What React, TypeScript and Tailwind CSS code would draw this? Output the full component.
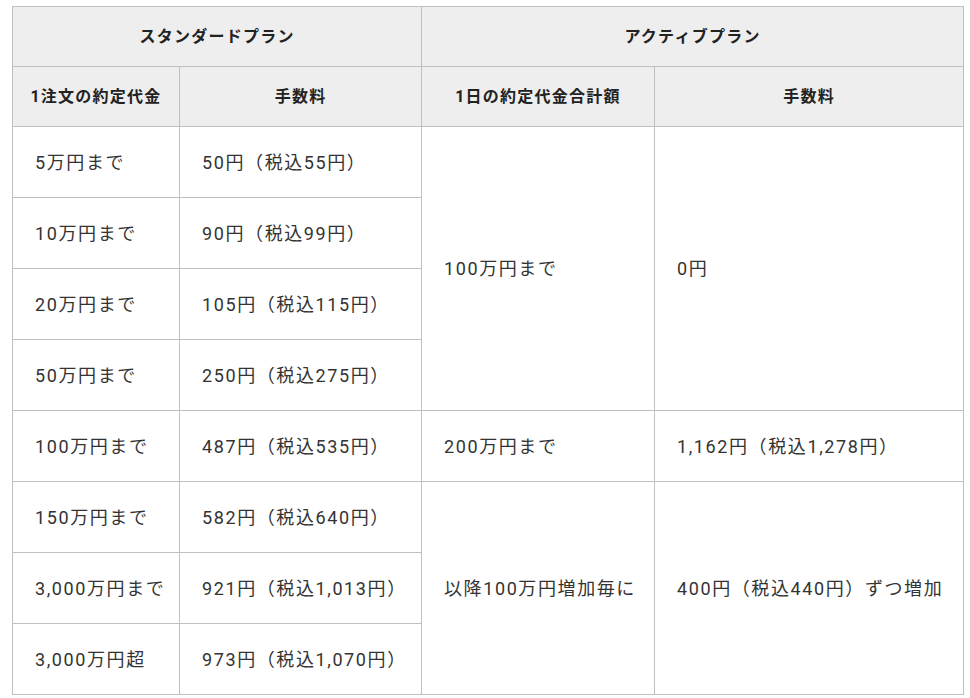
const standard = [
  ['5万円まで', '50円（税込55円）'],
  ['10万円まで', '90円（税込99円）'],
  ['20万円まで', '105円（税込115円）'],
  ['50万円まで', '250円（税込275円）'],
  ['100万円まで', '487円（税込535円）'],
  ['150万円まで', '582円（税込640円）'],
  ['3,000万円まで', '921円（税込1,013円）'],
  ['3,000万円超', '973円（税込1,070円）'],
]

// rows where the active plan column starts a (possibly spanning) cell
const active: Record<number, { amount: string; fee: string; span: number }> = {
  0: { amount: '100万円まで', fee: '0円', span: 4 },
  4: { amount: '200万円まで', fee: '1,162円（税込1,278円）', span: 1 },
  5: { amount: '以降100万円増加毎に', fee: '400円（税込440円）ずつ増加', span: 3 },
}

const th = 'border border-[#c0c0c0] bg-[#eeeeee] h-[60px] text-center font-bold text-[16px] tracking-[1.25px] text-[#222]'
const td = 'border border-[#c0c0c0] h-[71px] pl-[22px] pr-[4px] text-left align-middle text-[18px] tracking-[1.6px] whitespace-nowrap'

export default function App() {
  return (
    <div
      className="min-h-[698px] bg-white pt-[6px] pl-[12px] text-[#333]"
      style={{ fontFamily: "Roboto, 'Noto Sans CJK JP', sans-serif" }}
    >
      <table className="table-fixed border-collapse w-[951px]">
        <colgroup>
          <col className="w-[167px]" />
          <col className="w-[242px]" />
          <col className="w-[233px]" />
          <col className="w-[309px]" />
        </colgroup>
        <thead>
          <tr>
            <th colSpan={2} className={th}>スタンダードプラン</th>
            <th colSpan={2} className={th}>アクティブプラン</th>
          </tr>
          <tr>
            <th className={th}>1注文の約定代金</th>
            <th className={th}>手数料</th>
            <th className={th}>1日の約定代金合計額</th>
            <th className={th}>手数料</th>
          </tr>
        </thead>
        <tbody>
          {standard.map(([amount, fee], i) => (
            <tr key={amount}>
              <td className={td}>{amount}</td>
              <td className={td}>{fee}</td>
              {active[i] && (
                <>
                  <td rowSpan={active[i].span} className={td}>{active[i].amount}</td>
                  <td rowSpan={active[i].span} className={td}>{active[i].fee}</td>
                </>
              )}
            </tr>
          ))}
        </tbody>
      </table>
      <div className="mt-[4px] h-[10px] bg-[#f0f0f0]" />
    </div>
  )
}
